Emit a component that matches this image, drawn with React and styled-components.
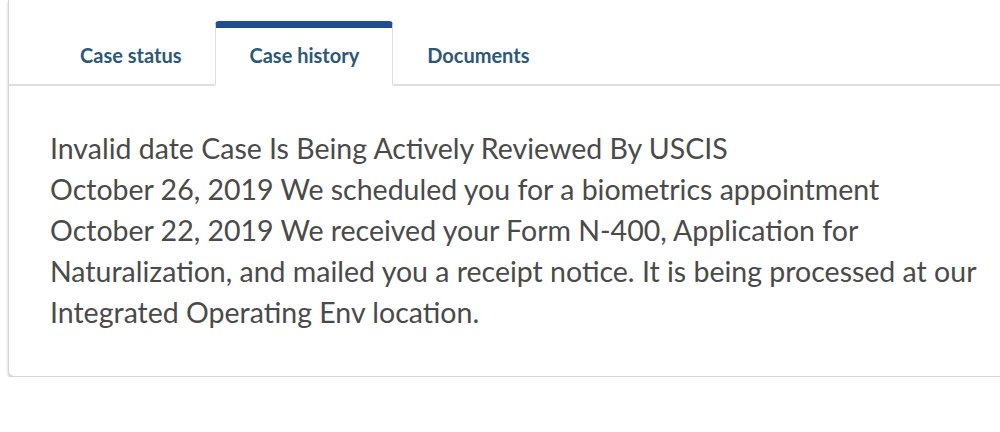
import React from "react";
import styled, { createGlobalStyle } from "styled-components";

const Global = createGlobalStyle`
  html, body { margin: 0; padding: 0; background: #fff; }
  body { font-family: "Lato", "Noto Sans", sans-serif; }
`;

const Card = styled.div`
  margin-left: 8px;
  width: 1020px;
  height: 377px;
  box-sizing: border-box;
  background: #fff;
  border: 1px solid #d6d6d6;
  border-top: none;
  border-radius: 0 0 6px 6px;
  box-shadow: 0 2px 3px rgba(0, 0, 0, 0.22);
  display: flex;
  flex-direction: column;
`;

const TabList = styled.div`
  display: flex;
  align-items: flex-end;
  margin-top: 21px;
  padding-left: 37px;
  border-bottom: 2px solid #dedede;
`;

const Tab = styled.div`
  box-sizing: border-box;
  height: 65px;
  padding: 0 33px 2px;
  display: flex;
  align-items: center;
  justify-content: center;
  font-size: 20px;
  font-weight: 700;
  color: #2b5878;
  margin-bottom: -2px;
  border: 1px solid ${(p) => (p.$active ? "#dcdcdc" : "transparent")};
  border-top: 7px solid ${(p) => (p.$active ? "#1f4f8f" : "transparent")};
  border-bottom: 2px solid ${(p) => (p.$active ? "#fff" : "transparent")};
  border-radius: ${(p) => (p.$active ? "4px 4px 0 0" : "0")};
  background: ${(p) => (p.$active ? "#fff" : "transparent")};
`;

const Body = styled.div`
  padding: 42px 0 0 41px;
  font-size: 28.5px;
  line-height: 41px;
  color: #4a4a4a;
  width: 955px;
`;

const Line = styled.div``;

export default function App() {
  return (
    <>
      <Global />
      <Card>
        <TabList>
          <Tab>Case status</Tab>
          <Tab $active>Case history</Tab>
          <Tab>Documents</Tab>
        </TabList>
        <Body>
          <Line>Invalid date Case Is Being Actively Reviewed By USCIS</Line>
          <Line>October 26, 2019 We scheduled you for a biometrics appointment</Line>
          <Line>
            October 22, 2019 We received your Form N-400, Application for Naturalization, and mailed you a receipt
            notice. It is being processed at our Integrated Operating Env location.
          </Line>
        </Body>
      </Card>
    </>
  );
}
